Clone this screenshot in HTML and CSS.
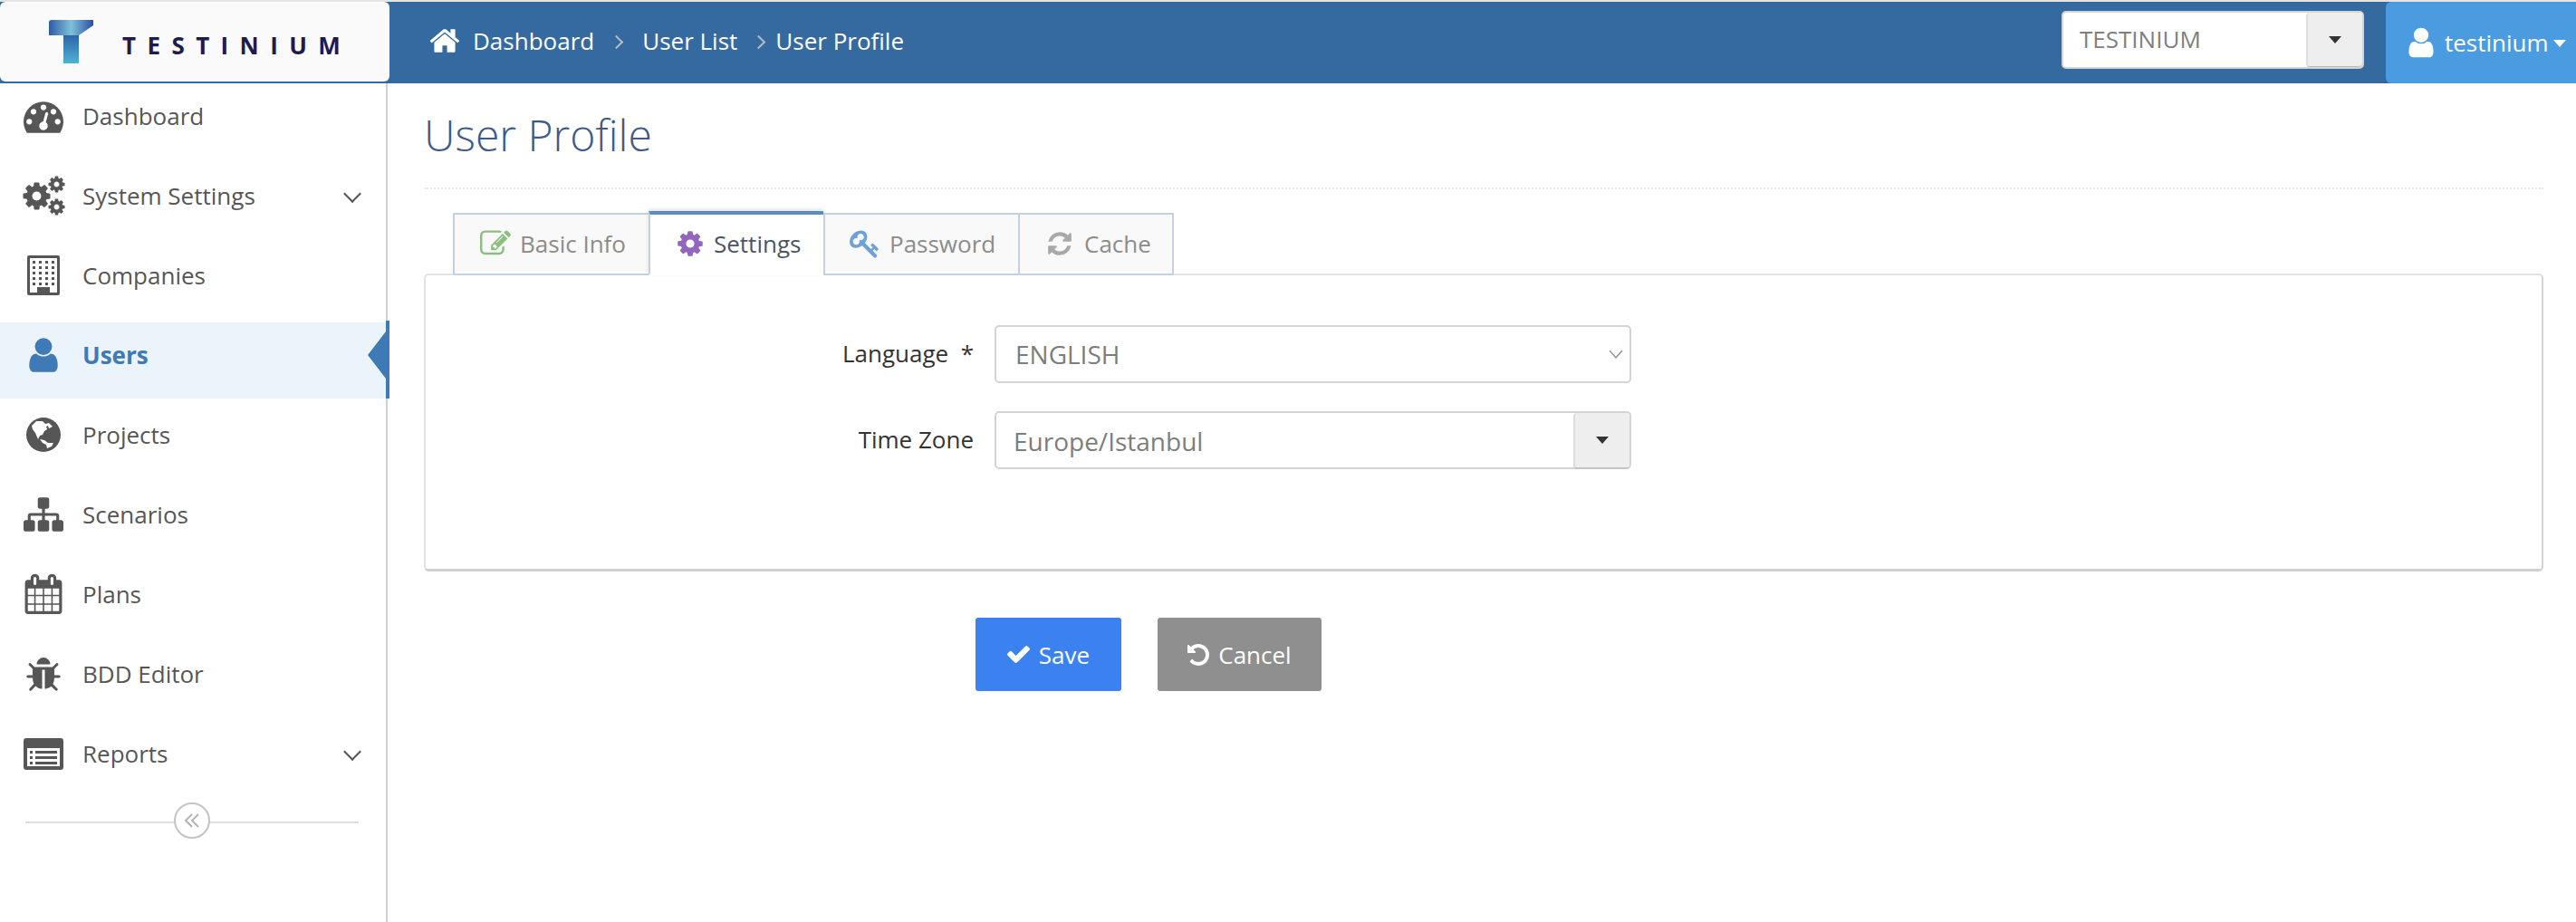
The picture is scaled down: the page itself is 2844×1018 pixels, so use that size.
FILE: index.html
```html
<!DOCTYPE html>
<html lang="en">

<head>
    <meta charset="UTF-8">
    <title>User Profile</title>
    <link rel="stylesheet" href="styles.css">
</head>

<body>
    <svg class="defs" width="0" height="0">
        <defs>
            <symbol id="i-cog" viewBox="0 0 1792 1792"><path d="M1152 896q0-106-75-181t-181-75-181 75-75 181 75 181 181 75 181-75 75-181zm512-109v222q0 12-8 23t-20 13l-185 28q-19 54-39 91 35 50 107 138 10 12 10 25t-9 23q-27 37-99 108t-94 71q-12 0-26-9l-138-108q-44 23-91 38-16 136-29 186-7 28-36 28h-222q-14 0-24.5-8.5t-11.5-21.5l-28-184q-49-16-90-37l-141 107q-10 9-25 9-14 0-25-11-126-114-165-168-7-10-7-23 0-12 8-23 15-21 51-66.5t54-70.5q-27-50-41-99l-183-27q-13-2-21-12.5t-8-23.5v-222q0-12 8-23t19-13l186-28q14-46 39-92-40-57-107-138-10-12-10-24 0-10 9-23 26-36 98.5-107.5t94.5-71.5q13 0 26 10l138 107q44-23 91-38 16-136 29-186 7-28 36-28h222q14 0 24.5 8.5t11.5 21.5l28 184q49 16 90 37l142-107q9-9 24-9 13 0 25 10 129 119 165 170 7 8 7 22 0 12-8 23-15 21-51 66.5t-54 70.5q26 50 41 98l183 28q13 2 21 12.5t8 23.5z"/></symbol>
            <symbol id="i-user" viewBox="0 0 1792 1792"><path d="M1536 1399q0 109-62.5 187t-150.5 78h-854q-88 0-150.5-78t-62.5-187q0-85 8.5-160.5t31.5-152 58.5-131 94-89 134.5-34.5q131 128 313 128t313-128q76 0 134.5 34.5t94 89 58.5 131 31.5 152 8.5 160.5zm-256-887q0 159-112.5 271.5t-271.5 112.5-271.5-112.5-112.5-271.5 112.5-271.5 271.5-112.5 271.5 112.5 112.5 271.5z"/></symbol>
        </defs>
    </svg>

    <header class="topbar">
        <div class="brand">
            <svg class="brand-mark" viewBox="0 0 50 48">
                <defs>
                    <linearGradient id="lg1" x1="0" y1="0" x2="1" y2="0">
                        <stop offset="0" stop-color="#2f5aa8"/>
                        <stop offset="0.5" stop-color="#7fc0d8"/>
                        <stop offset="1" stop-color="#2f4fa3"/>
                    </linearGradient>
                    <linearGradient id="lg2" x1="0" y1="0" x2="0" y2="1">
                        <stop offset="0" stop-color="#2c62a8"/>
                        <stop offset="1" stop-color="#4fb2d4"/>
                    </linearGradient>
                </defs>
                <path d="M16 16H33V48H16z" fill="url(#lg2)"/>
                <path d="M3 0H49V6L33 17H0V3Q0 0 3 0z" fill="url(#lg1)"/>
            </svg>
            <span class="brand-name">TESTINIUM</span>
        </div>
        <nav class="crumbs">
            <svg class="crumb-home" viewBox="0 0 1792 1792"><path d="M1472 992v480q0 26-19 45t-45 19h-384v-384h-256v384h-384q-26 0-45-19t-19-45v-480q0-1 .5-3t.5-3l575-474 575 474q1 2 1 6zm223-69l-62 74q-8 9-21 11h-3q-13 0-21-7l-692-577-692 577q-12 8-24 7-13-2-21-11l-62-74q-8-10-7-23.5t11-21.5l719-599q32-26 76-26t76 26l244 204v-195q0-14 9-23t23-9h192q14 0 23 9t9 23v408l219 182q10 8 11 21.5t-7 23.5z"/></svg>
            <span>Dashboard</span>
            <i class="crumb-sep crumb-sep-first"></i>
            <span>User List</span>
            <i class="crumb-sep"></i>
            <span>User Profile</span>
        </nav>
        <div class="project-select">
            <span class="project-value">TESTINIUM</span>
            <span class="caret-btn"><i class="caret"></i></span>
        </div>
        <div class="user-btn">
            <svg class="user-icon"><use href="#i-user"/></svg>
            <span>testinium</span>
            <i class="caret caret-white"></i>
        </div>
    </header>

    <div class="layout">
        <aside class="sidebar">
            <ul class="menu">
                <li class="menu-item">
                    <span class="menu-icon">
                        <svg width="44" height="44" viewBox="0 0 1792 1792"><path d="M384 1152q0-53-37.5-90.5t-90.5-37.5-90.5 37.5-37.5 90.5 37.5 90.5 90.5 37.5 90.5-37.5 37.5-90.5zm192-448q0-53-37.5-90.5t-90.5-37.5-90.5 37.5-37.5 90.5 37.5 90.5 90.5 37.5 90.5-37.5 37.5-90.5zm428 481l101-382q6-26-7.5-48.5t-38.5-29.5-48 6.5-30 39.5l-101 382q-60 5-107 43.5t-63 98.5q-20 77 20 146t117 89 146-20 89-117q16-60-6-117t-72-91zm660-33q0-53-37.5-90.5t-90.5-37.5-90.5 37.5-37.5 90.5 37.5 90.5 90.5 37.5 90.5-37.5 37.5-90.5zm-640-640q0-53-37.5-90.5t-90.5-37.5-90.5 37.5-37.5 90.5 37.5 90.5 90.5 37.5 90.5-37.5 37.5-90.5zm448 192q0-53-37.5-90.5t-90.5-37.5-90.5 37.5-37.5 90.5 37.5 90.5 90.5 37.5 90.5-37.5 37.5-90.5zm320 448q0 261-141 483-19 29-54 29h-1402q-35 0-54-29-141-221-141-483 0-182 71-348t191-286 286-191 348-71 348 71 286 191 191 286 71 348z"/></svg>
                    </span>
                    <span class="menu-text">Dashboard</span>
                </li>
                <li class="menu-item">
                    <span class="menu-icon">
                        <svg class="icon-cogs" width="50" height="46" viewBox="0 0 50 46">
                            <use href="#i-cog" x="0" y="6" width="35" height="35"/>
                            <use href="#i-cog" x="29" y="0" width="21" height="21"/>
                            <use href="#i-cog" x="29" y="25" width="21" height="21"/>
                        </svg>
                    </span>
                    <span class="menu-text">System Settings</span>
                    <i class="chev"></i>
                </li>
                <li class="menu-item">
                    <span class="menu-icon">
                        <svg width="36" height="44" viewBox="0 0 36 44">
                            <path fill-rule="evenodd" d="M2 0H34Q36 0 36 2V42Q36 44 34 44H2Q0 44 0 42V2Q0 0 2 0zM3 3V41H11V35H25V41H33V3z"/>
                            <path d="M6 6h3v3H6zm7 0h3v3h-3zm7 0h3v3h-3zm7 0h3v3h-3zM6 12h3v3H6zm7 0h3v3h-3zm7 0h3v3h-3zm7 0h3v3h-3zM6 18h3v3H6zm7 0h3v3h-3zm7 0h3v3h-3zm7 0h3v3h-3zM6 24h3v3H6zm7 0h3v3h-3zm7 0h3v3h-3zm7 0h3v3h-3zM6 30h3v3H6zm21 0h3v3h-3zM13 30h3v3h-3zm7 0h3v3h-3z"/>
                        </svg>
                    </span>
                    <span class="menu-text">Companies</span>
                </li>
                <li class="menu-item is-active">
                    <span class="menu-icon">
                        <svg width="44" height="44"><use href="#i-user"/></svg>
                    </span>
                    <span class="menu-text">Users</span>
                </li>
                <li class="menu-item">
                    <span class="menu-icon">
                        <svg width="38" height="38" viewBox="0 0 38 38">
                            <circle cx="19" cy="19" r="19"/>
                            <path fill="#fff" d="M6 9 11 4 18 4 21 7 25 6 29 10 25 12 24 9 22 10 23 13 20 15 18 19 15 20 13 24 10 17 7 13z"/>
                            <path fill="#fff" d="M15 24 20 25 24 28 30 28 28 32 23 34 22 30 18 28z"/>
                        </svg>
                    </span>
                    <span class="menu-text">Projects</span>
                </li>
                <li class="menu-item">
                    <span class="menu-icon">
                        <svg width="44" height="44" viewBox="0 128 1792 1536"><path d="M1792 1248v320q0 40-28 68t-68 28h-320q-40 0-68-28t-28-68v-320q0-40 28-68t68-28h96v-192h-512v192h96q40 0 68 28t28 68v320q0 40-28 68t-68 28h-320q-40 0-68-28t-28-68v-320q0-40 28-68t68-28h96v-192h-512v192h96q40 0 68 28t28 68v320q0 40-28 68t-68 28h-320q-40 0-68-28t-28-68v-320q0-40 28-68t68-28h96v-192q0-52 38-90t90-38h512v-192h-96q-40 0-68-28t-28-68v-320q0-40 28-68t68-28h320q40 0 68 28t28 68v320q0 40-28 68t-68 28h-96v192h512q52 0 90 38t38 90v192h96q40 0 68 28t28 68z"/></svg>
                    </span>
                    <span class="menu-text">Scenarios</span>
                </li>
                <li class="menu-item">
                    <span class="menu-icon">
                        <svg width="42" height="44" viewBox="0 0 1664 1792"><path d="M128 1664h288v-288h-288v288zm352 0h320v-288h-320v288zm-352-352h288v-320h-288v320zm352 0h320v-320h-320v320zm-352-384h288v-288h-288v288zm736 736h320v-288h-320v288zm-384-736h320v-288h-320v288zm768 736h288v-288h-288v288zm-384-352h320v-320h-320v320zm-352-864v-288q0-13-9.5-22.5t-22.5-9.5h-64q-13 0-22.5 9.5t-9.5 22.5v288q0 13 9.5 22.5t22.5 9.5h64q13 0 22.5-9.5t9.5-22.5zm736 864h288v-320h-288v320zm-384-384h320v-288h-320v288zm384 0h288v-288h-288v288zm32-480v-288q0-13-9.5-22.5t-22.5-9.5h-64q-13 0-22.5 9.5t-9.5 22.5v288q0 13 9.5 22.5t22.5 9.5h64q13 0 22.5-9.5t9.5-22.5zm384-64v1280q0 52-38 90t-90 38h-1408q-52 0-90-38t-38-90v-1280q0-52 38-90t90-38h128v-96q0-66 47-113t113-47h64q66 0 113 47t47 113v96h384v-96q0-66 47-113t113-47h64q66 0 113 47t47 113v96h128q52 0 90 38t38 90z"/></svg>
                    </span>
                    <span class="menu-text">Plans</span>
                </li>
                <li class="menu-item">
                    <span class="menu-icon">
                        <svg width="42" height="42" viewBox="0 0 1792 1664"><path d="M1696 960q0 26-19 45t-45 19h-224q0 171-67 290l208 209q19 19 19 45t-19 45q-18 19-45 19t-45-19l-198-197q-5 5-15 13t-42 28.5-65 36.5-82 29-97 13v-896h-128v896q-51 0-101.5-13.5t-87-33-66-39-43.5-32.5l-15-14-183 207q-20 21-48 21-24 0-43-16-19-18-20.5-44.5t15.5-46.5l202-227q-58-114-58-274h-224q-26 0-45-19t-19-45 19-45 45-19h224v-294l-173-173q-19-19-19-45t19-45 45-19 45 19l173 173h844l173-173q19-19 45-19t45 19 19 45-19 45l-173 173v294h224q26 0 45 19t19 45zm-480-576h-640q0-133 93.5-226.5t226.5-93.5 226.5 93.5 93.5 226.5z"/></svg>
                    </span>
                    <span class="menu-text">BDD Editor</span>
                </li>
                <li class="menu-item">
                    <span class="menu-icon">
                        <svg width="44" height="35" viewBox="0 0 44 35">
                            <path fill-rule="evenodd" d="M3 0H41Q44 0 44 3V32Q44 35 41 35H3Q0 35 0 32V3Q0 0 3 0zM4 11V31H40V11z"/>
                            <path d="M7 14h3v3H7zm0 6h3v3H7zm0 6h3v3H7zM13 14h24v3H13zm0 6h24v3H13zm0 6h24v3H13z"/>
                        </svg>
                    </span>
                    <span class="menu-text">Reports</span>
                    <i class="chev"></i>
                </li>
            </ul>
            <div class="collapse">
                <span class="collapse-btn">
                    <svg width="18" height="18" viewBox="0 0 18 18"><path d="M9 2 2 9l7 7M16 2 9 9l7 7" fill="none" stroke="#b4b4b4" stroke-width="2"/></svg>
                </span>
            </div>
        </aside>

        <main class="content">
            <h1 class="page-title">User Profile</h1>
            <div class="tabs">
                <div class="tab tab-basic">
                    <svg class="tab-icon icon-green" viewBox="0 0 1792 1792"><path d="M888 1184l116-116-152-152-116 116v56h96v96h56zm440-720q-16-16-33 1l-350 350q-17 17-1 33t33-1l350-350q17-17 1-33zm80 594v190q0 119-84.5 203.5t-203.5 84.5h-832q-119 0-203.5-84.5t-84.5-203.5v-832q0-119 84.5-203.5t203.5-84.5h832q63 0 117 25 15 7 18 23 3 17-9 29l-49 49q-14 14-32 8-23-6-45-6h-832q-66 0-113 47t-47 113v832q0 66 47 113t113 47h832q66 0 113-47t47-113v-126q0-13 9-22l64-64q15-15 35-7t20 29zm-96-738l288 288-672 672h-288v-288zm444 132l-92 92-288-288 92-92q28-28 68-28t68 28l152 152q28 28 28 68t-28 68z"/></svg>
                    <span>Basic Info</span>
                </div>
                <div class="tab tab-settings is-active">
                    <svg class="tab-icon icon-purple"><use href="#i-cog"/></svg>
                    <span>Settings</span>
                </div>
                <div class="tab tab-password">
                    <svg class="tab-icon icon-blue" viewBox="0 0 1792 1792"><path d="M832 512q0-80-56-136t-136-56-136 56-56 136q0 42 19 83-41-19-83-19-80 0-136 56t-56 136 56 136 136 56 136-56 56-136q0-42-19-83 41 19 83 19 80 0 136-56t56-136zm851 704q0 17-49 66t-66 49q-9 0-28.5-16t-36.5-33-38.5-40-24.5-26l-96 96 220 220q28 28 28 68 0 42-39 81t-81 39q-40 0-68-28l-671-671q-176 131-365 131-163 0-265.5-102.5t-102.5-265.5q0-160 95-313t248-248 313-95q163 0 265.5 102.5t102.5 265.5q0 189-131 365l355 355 96-96q-2-2-26-24.5t-40-38.5-33-36.5-16-28.5q0-17 49-66t66-49q13 0 23 10 6 6 46 44.5t82 79.5 86.5 86 73 78 28.5 41z"/></svg>
                    <span>Password</span>
                </div>
                <div class="tab tab-cache">
                    <svg class="tab-icon icon-gray" viewBox="0 0 1792 1792"><path d="M1639 1056q0 5-1 7-64 268-268 434.5t-478 166.5q-146 0-282.5-55t-243.5-157l-129 129q-19 19-45 19t-45-19-19-45v-448q0-26 19-45t45-19h448q26 0 45 19t19 45-19 45l-137 137q71 66 161 102t187 36q134 0 250-65t186-179q11-17 53-117 8-23 30-23h192q13 0 22.5 9.5t9.5 22.5zm25-800v448q0 26-19 45t-45 19h-448q-26 0-45-19t-19-45 19-45l138-138q-148-137-349-137-134 0-250 65t-186 179q-11 17-53 117-8 23-30 23h-199q-13 0-22.5-9.5t-9.5-22.5v-7q65-268 270-434.5t480-166.5q146 0 284 55.5t245 156.5l130-129q19-19 45-19t45 19 19 45z"/></svg>
                    <span>Cache</span>
                </div>
            </div>
            <div class="panel">
                <div class="form-row">
                    <label class="form-label">Language&nbsp; *</label>
                    <div class="field">
                        <span class="field-value">ENGLISH</span>
                        <svg class="field-chev" viewBox="0 0 16 10"><path d="M1 1l7 8 7-8" fill="none" stroke="#8a8a8a" stroke-width="1.2"/></svg>
                    </div>
                </div>
                <div class="form-row">
                    <label class="form-label">Time Zone</label>
                    <div class="field field-combo">
                        <span class="field-value">Europe/Istanbul</span>
                        <span class="caret-btn"><i class="caret"></i></span>
                    </div>
                </div>
            </div>
            <div class="actions">
                <button class="btn btn-save">
                    <svg class="btn-icon btn-icon-check" viewBox="120 342 1552 1172"><path d="M1671 566q0 40-28 68l-724 724-136 136q-28 28-68 28t-68-28l-136-136-362-362q-28-28-28-68t28-68l136-136q28-28 68-28t68 28l294 295 656-657q28-28 68-28t68 28l136 136q28 28 28 68z"/></svg>
                    Save
                </button>
                <button class="btn btn-cancel">
                    <svg class="btn-icon" viewBox="128 128 1536 1536"><path d="M1664 896q0 156-61 298t-164 245-245 164-298 61q-172 0-327-72.5t-264-204.5q-7-10-6.5-22.5t8.5-20.5l137-138q10-9 25-9 16 2 23 12 73 95 179 147t225 52q104 0 198.5-40.5t163.5-109.5 109.5-163.5 40.5-198.5-40.5-198.5-109.5-163.5-163.5-109.5-198.5-40.5q-98 0-188 35.5t-160 101.5l137 138q31 30 14 69-17 40-59 40h-448q-26 0-45-19t-19-45v-448q0-42 40-59 39-17 69 14l130 129q107-101 244.5-156.5t284.5-55.5q156 0 298 61t245 164 164 245 61 298z"/></svg>
                    Cancel
                </button>
            </div>
        </main>
    </div>
</body>

</html>
```

FILE: styles.css
```css
* {
    padding: 0;
    margin: 0;
    box-sizing: border-box;
}

html,
body {
    height: 100%;
    overflow: hidden;
}

body {
    font-family: "Open Sans", "Liberation Sans", sans-serif;
    font-size: 26px;
    color: #555;
    background-color: #fff;
    display: flex;
    flex-direction: column;
}

ul {
    list-style: none;
}

i {
    display: block;
}

svg {
    fill: currentColor;
    display: block;
}

.defs {
    position: absolute;
}

/* top bar */
.topbar {
    height: 92px;
    flex: none;
    display: flex;
    align-items: stretch;
    background-color: #346a9f;
    border-top: 2px solid #e4e4e4;
    color: #fff;
}

.brand {
    width: 430px;
    height: 88px;
    flex: none;
    display: flex;
    align-items: flex-start;
    padding-left: 54px;
    background-color: #fafafa;
    border-radius: 6px;
}

.brand-mark {
    width: 50px;
    height: 48px;
    margin-top: 20px;
}

.brand-name {
    margin: 30px 0 0 31px;
    font-size: 26px;
    line-height: 36px;
    font-weight: 700;
    letter-spacing: 12.4px;
    color: #1f1b4e;
}

.crumbs {
    flex: 1;
    display: flex;
    align-items: center;
    padding: 0 0 4px 43px;
    line-height: 36px;
}

.crumb-home {
    width: 36px;
    height: 36px;
    margin-right: 13px;
}

.crumb-sep {
    width: 11px;
    height: 11px;
    margin: 3px 13px 0 18px;
    border-top: 2px solid #b3bcc6;
    border-right: 2px solid #b3bcc6;
    transform: rotate(45deg);
}

.crumb-sep-first {
    margin: 3px 23px 0 19px;
}

.project-select {
    width: 334px;
    height: 64px;
    margin: 10px 24px 0 0;
    flex: none;
    display: flex;
    align-items: stretch;
    background-color: #fff;
    border: 2px solid #d4d4d4;
    border-radius: 5px;
    color: #808080;
}

.project-value {
    flex: 1;
    padding: 0 0 0 18px;
    line-height: 58px;
}

.caret-btn {
    width: 62px;
    flex: none;
    display: flex;
    align-items: center;
    justify-content: center;
    background-color: #eee;
    border-left: 2px solid #ddd;
    border-bottom: 1px solid #bbb;
    border-radius: 4px;
}

.caret {
    width: 0;
    height: 0;
    border-left: 7px solid transparent;
    border-right: 7px solid transparent;
    border-top: 8px solid #333;
}

.caret-white {
    border-top-color: #fff;
    margin: 2px 0 0 5px;
}

.user-btn {
    width: 210px;
    flex: none;
    display: flex;
    align-items: center;
    padding: 0 0 0 20px;
    background-color: #4a9bdf;
    border-radius: 6px 0 0 6px;
}

.user-icon {
    width: 38px;
    height: 38px;
    margin-right: 7px;
}

/* sidebar */
.layout {
    flex: 1;
    display: flex;
    min-height: 0;
}

.sidebar {
    width: 428px;
    flex: none;
    border-right: 2px solid #cfcfcf;
}

.menu-item {
    position: relative;
    height: 88px;
    display: flex;
    align-items: center;
    padding: 0 0 12px 26px;
    color: #565656;
}

.menu-item:first-child {
    height: 86px;
    padding-bottom: 14px;
}

.menu-icon {
    width: 44px;
    height: 44px;
    margin-right: 21px;
    flex: none;
    display: flex;
    align-items: center;
    justify-content: center;
}

.icon-cogs {
    flex: none;
}

.menu-text {
    flex: 1;
}

.menu-item.is-active {
    color: #3f79b6;
    background: linear-gradient(#fff 2px, #ebf3fb 2px, #ebf3fb 86px, #fff 86px);
    font-weight: 700;
}

.menu-item.is-active::before {
    content: "";
    position: absolute;
    right: -4px;
    top: 0;
    bottom: 2px;
    width: 4px;
    background-color: #3f79b6;
}

.menu-item.is-active::after {
    content: "";
    position: absolute;
    right: 0;
    top: 12px;
    border-top: 26px solid transparent;
    border-bottom: 26px solid transparent;
    border-right: 20px solid #3f79b6;
}

.chev {
    width: 14px;
    height: 14px;
    margin: 0 30px 4px 0;
    border-right: 2px solid #555;
    border-bottom: 2px solid #555;
    transform: rotate(45deg);
}

.collapse {
    position: relative;
    height: 2px;
    margin: 25px 30px 0 28px;
    background-color: #ddd;
}

.collapse-btn {
    position: absolute;
    left: 164px;
    top: -21px;
    width: 40px;
    height: 40px;
    display: flex;
    align-items: center;
    justify-content: center;
    background-color: #fff;
    border: 2px solid #c4c4c4;
    border-radius: 50%;
}

/* main content */
.content {
    flex: 1;
    min-width: 0;
    padding: 0 36px 0 40px;
}

.page-title {
    height: 117px;
    padding-top: 24px;
    font-size: 48px;
    line-height: 66px;
    font-weight: 300;
    color: #3d5a8a;
    border-bottom: 2px dotted #e6e6e6;
}

.tabs {
    display: flex;
    align-items: flex-end;
    height: 61px;
    margin: 32px 0 0;
    padding-left: 32px;
    position: relative;
    z-index: 1;
}

.tab {
    height: 69px;
    display: flex;
    align-items: center;
    padding-bottom: 2px;
    margin-bottom: -2px;
    background-color: #f9f9f9;
    border: 2px solid #c6d1de;
    border-right: none;
    color: #8c8c8c;
}

.tab-basic {
    width: 216px;
    padding-left: 28px;
}

.tab-settings {
    width: 193px;
    padding-left: 28px;
}

.tab-password {
    width: 215px;
    padding-left: 27px;
}

.tab-cache {
    width: 172px;
    padding-left: 29px;
    border-right: 2px solid #c6d1de;
}

.tab.is-active {
    height: 71px;
    background-color: #fff;
    color: #4a5566;
    border-top: 4px solid #5b8dbe;
    border-bottom-color: #fff;
    box-shadow: 0 -2px 4px rgba(0, 0, 0, 0.12);
}

.tab-icon {
    width: 34px;
    height: 34px;
    margin-right: 10px;
    flex: none;
}

.tab-settings .tab-icon {
    width: 32px;
    height: 32px;
}

.tab-cache .tab-icon {
    width: 30px;
    height: 30px;
    margin-right: 12px;
}

.icon-green {
    color: #8cbf7f;
}

.icon-purple {
    color: #9266bd;
}

.icon-blue {
    color: #6fa0d6;
}

.icon-gray {
    color: #a9a9a9;
}

.panel {
    height: 329px;
    padding-top: 55px;
    border: 2px solid #e2e2e2;
    border-bottom: 3px solid #d0d0d0;
    border-right-color: #d4d4d4;
    border-radius: 5px;
}

.form-row {
    display: flex;
    align-items: center;
    height: 64px;
    margin-bottom: 31px;
    color: #333;
}

.form-label {
    width: 605px;
    text-align: right;
    padding: 0 0 2px;
}

.field {
    width: 703px;
    height: 64px;
    margin-left: 23px;
    flex: none;
    display: flex;
    align-items: center;
    justify-content: space-between;
    font-size: 28px;
    color: #7d7d7d;
    background-color: #fff;
    border: 2px solid #d4d4d4;
    border-radius: 5px;
    padding: 0 7px 0 21px;
}

.field-chev {
    width: 16px;
    height: 10px;
}

.field-combo {
    padding: 0 0 0 19px;
    align-items: stretch;
    line-height: 62px;
}

.field-combo .caret-btn {
    margin: 0;
    border-bottom: 2px solid #c4c4c4;
    height: 62px;
}

.actions {
    display: flex;
    gap: 40px;
    margin: 51px 0 0 609px;
}

.btn {
    height: 81px;
    display: flex;
    align-items: center;
    justify-content: center;
    gap: 10px;
    font: inherit;
    color: #fff;
    border: none;
    border-radius: 3px;
}

.btn-icon {
    height: 24px;
    width: 24px;
}

.btn-icon-check {
    height: 19px;
    width: 25px;
}

.btn-save {
    width: 161px;
    background-color: #3b82f0;
}

.btn-cancel {
    width: 181px;
    background-color: #8f8f8f;
}
```
